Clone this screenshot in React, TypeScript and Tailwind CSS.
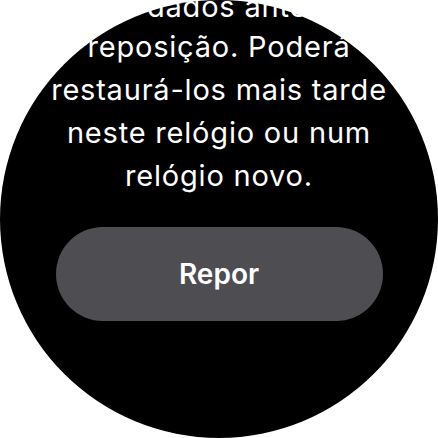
import React from "react";

export default function App() {
  const lines = [
    "reposição. Poderá",
    "restaurá-los mais tarde",
    "neste relógio ou num",
    "relógio novo.",
  ];
  return (
    <div className="w-[438px] h-[438px] bg-white overflow-hidden">
      <div
        className="w-[438px] h-[438px] rounded-full bg-black flex flex-col items-center"
        style={{ fontFamily: "Inter, 'Noto Sans', sans-serif" }}
      >
        <div className="-mt-[12px] text-white text-[29px] leading-[43px] tracking-[0.8px] text-center whitespace-nowrap">
          <div className="leading-[37px]">seus dados antes da</div>
          {lines.map((l) => (
            <div key={l}>{l}</div>
          ))}
        </div>
        <button className="mt-[30px] w-[327px] h-[94px] rounded-full bg-[#4e4d52] text-white text-[28px] font-semibold">
          Repor
        </button>
      </div>
    </div>
  );
}
